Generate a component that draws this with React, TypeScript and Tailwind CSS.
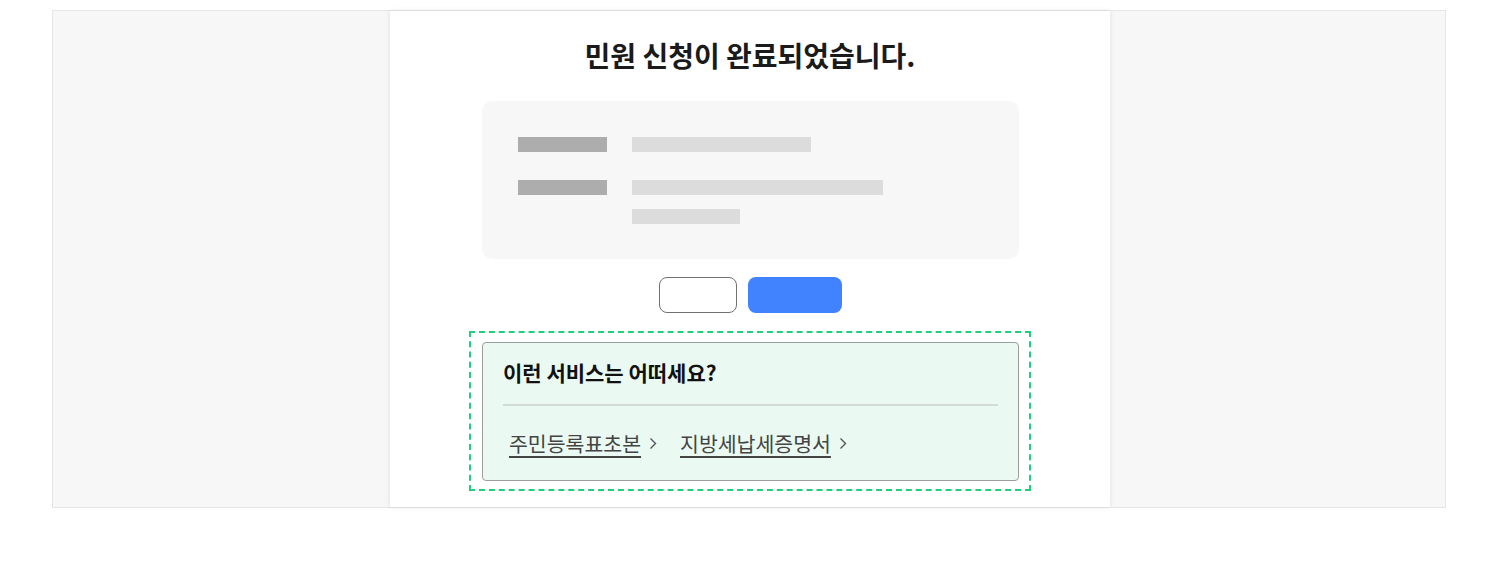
import React from "react";

function Chevron() {
  return (
    <svg width="8" height="13" viewBox="0 0 8 13" fill="none" className="ml-[8px]">
      <path d="M1.5 1.5L6.5 6.5L1.5 11.5" stroke="#555" strokeWidth="1.4" />
    </svg>
  );
}

function SkeletonRow({ value, extra }: { value: string; extra?: string }) {
  return (
    <div className="flex gap-[25px]">
      <div className="w-[89px] h-[15px] bg-[#adadad]" />
      <div className="flex flex-col gap-[14px]">
        <div className={`${value} h-[15px] bg-[#dcdcdc]`} />
        {extra && <div className={`${extra} h-[15px] bg-[#dcdcdc]`} />}
      </div>
    </div>
  );
}

export default function App() {
  return (
    <div
      className="w-full h-[572px] bg-white pt-[10px]"
      style={{ fontFamily: '"Noto Sans CJK KR", "Noto Sans", sans-serif' }}
    >
      <div className="mx-[52px] h-[498px] border border-[#e6e6e6] bg-[#f7f7f7] flex pl-[337px]">
        <div className="w-[720px] h-full bg-white shadow-[0_0_5px_rgba(0,0,0,0.1)] flex flex-col items-center">
          <h1 className="mt-[25px] text-[28px] leading-[38px] font-bold text-[#1a1a1a]">
            민원 신청이 완료되었습니다.
          </h1>

          <div className="mt-[27px] w-[537px] h-[158px] rounded-[10px] bg-[#f7f7f7] pl-[36px] pt-[36px] flex flex-col gap-[28px]">
            <SkeletonRow value="w-[179px]" />
            <SkeletonRow value="w-[251px]" extra="w-[108px]" />
          </div>

          <div className="mt-[18px] flex gap-[11px]">
            <button className="w-[78px] h-[36px] rounded-[8px] border border-[#707070] bg-white" />
            <button className="w-[94px] h-[36px] rounded-[8px] bg-[#4082ff]" />
          </div>

          <div className="mt-[18px] w-[562px] h-[160px] border-2 border-dashed border-[#1fd07a] pl-[11px] pr-[10px] pt-[9px]">
            <div className="h-[139px] rounded-[4px] border border-[#9a9f9c] bg-[#eafaf2] px-[20px] pt-[15px]">
              <h2 className="text-[21px] leading-[28px] font-bold text-[#111]">
                이런 서비스는 어떠세요?
              </h2>
              <div className="mt-[18px] h-[2px] bg-[#d3dbd6]" />
              <div className="mt-[23px] pl-[6px] flex items-center gap-[23px]">
                <a href="#" className="flex items-center text-[20.5px] leading-[28px] text-[#444] underline underline-offset-[4px]">
                  주민등록표초본
                  <Chevron />
                </a>
                <a href="#" className="flex items-center text-[20.5px] leading-[28px] text-[#444] underline underline-offset-[4px]">
                  지방세납세증명서
                  <Chevron />
                </a>
              </div>
            </div>
          </div>
        </div>
      </div>
    </div>
  );
}
